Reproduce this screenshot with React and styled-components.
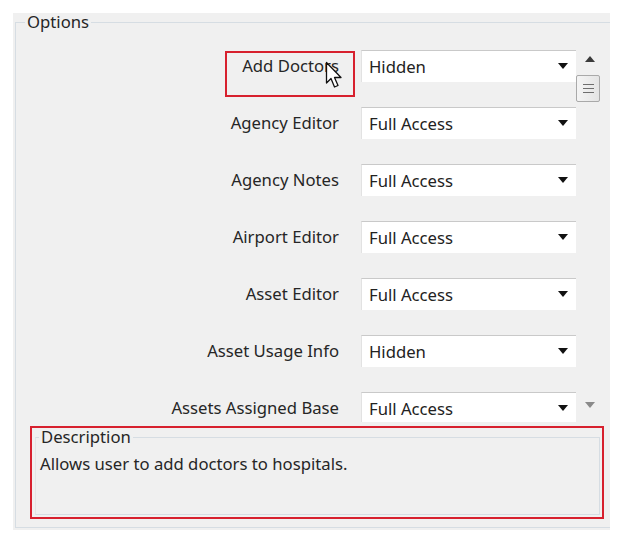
import React from "react";
import styled, { createGlobalStyle } from "styled-components";

const Global = createGlobalStyle`
  html, body {
    margin: 0;
    padding: 0;
    background: #fff;
  }
  body {
    font-family: "Noto Sans", "DejaVu Sans", sans-serif;
    font-size: 16.7px;
    color: #262626;
  }
`;

const Panel = styled.div`
  margin: 13px 0 0 13px;
  width: 597px;
  height: 517px;
  background: #f0f0f0;
  box-sizing: border-box;
  padding-left: 2px;
`;

const Group = styled.fieldset`
  margin: 0;
  padding: 6px 0 0 0;
  width: 595px;
  height: 515px;
  box-sizing: border-box;
  border: 1px solid #d6dde3;
  border-right: none;
  display: flex;
  flex-direction: column;
`;

const Legend = styled.legend`
  margin-left: 9px;
  padding: 0 2px;
  line-height: 18px;
  font-size: 16.7px;
`;

const ScrollArea = styled.div`
  display: flex;
  height: 385px;
  width: 586px;
`;

const Viewport = styled.div`
  flex: 1;
  overflow: hidden;
`;

const Row = styled.div`
  position: relative;
  height: 57px;
  display: grid;
  grid-template-columns: 1fr 215px;
  column-gap: 22px;
  align-items: center;
`;

const Label = styled.div`
  text-align: right;
  white-space: nowrap;
`;

const Highlight = styled.div`
  position: absolute;
  left: 209px;
  top: 14px;
  width: 126px;
  height: 42px;
  border: 2px solid #d7202e;
  pointer-events: none;
`;

const Cursor = styled.svg`
  position: absolute;
  left: 309px;
  top: 24px;
`;

const Select = styled.div`
  height: 32px;
  box-sizing: border-box;
  background: #fff;
  border-top: 1px solid #c9c9c9;
  border-left: 1px solid #e2e2e2;
  display: flex;
  align-items: center;
  justify-content: space-between;
  padding: 0 8px 0 7px;
  color: #222;
`;

const Caret = styled.span`
  width: 0;
  height: 0;
  border-left: 5px solid transparent;
  border-right: 5px solid transparent;
  border-top: 6px solid #111;
`;

const Scrollbar = styled.div`
  width: 25px;
  margin-left: 1px;
  display: flex;
  flex-direction: column;
  align-items: center;
  padding-top: 19px;
  box-sizing: border-box;
`;

const Arrow = styled.span`
  width: 0;
  height: 0;
  border-left: 5px solid transparent;
  border-right: 5px solid transparent;
  ${(p) =>
    p.$up
      ? `border-bottom: 6px solid ${p.$color};`
      : `border-top: 6px solid ${p.$color};`}
`;

const Thumb = styled.div`
  margin-top: 13px;
  margin-left: -3px;
  width: 24px;
  height: 27px;
  box-sizing: border-box;
  border: 1px solid #a9a9a9;
  border-radius: 2px;
  background: linear-gradient(to right, #f4f4f4, #e4e4e4);
  display: flex;
  flex-direction: column;
  justify-content: center;
  align-items: center;
  gap: 3px;
`;

const Grip = styled.span`
  width: 11px;
  height: 1px;
  background: #6e6e6e;
`;

const Spacer = styled.div`
  flex: 1;
`;

const BottomGap = styled.div`
  height: 14px;
`;

const DescBox = styled.div`
  margin: 4px 0 0 14px;
  width: 574px;
  height: 93px;
  box-sizing: border-box;
  border: 2px solid #d7202e;
  padding: 0 2px 4px 3px;
`;

const DescGroup = styled.fieldset`
  margin: 0;
  padding: 8px 0 0 4px;
  height: 87px;
  box-sizing: border-box;
  border: 1px solid #d6dde3;
  border-left-color: #e4e4e4;
`;

const DescLegend = styled.legend`
  margin-left: -1px;
  padding: 0 2px;
  line-height: 18px;
  font-size: 16.7px;
`;

const DescText = styled.div`
  line-height: 20px;
`;

const rows = [
  ["Add Doctors", "Hidden"],
  ["Agency Editor", "Full Access"],
  ["Agency Notes", "Full Access"],
  ["Airport Editor", "Full Access"],
  ["Asset Editor", "Full Access"],
  ["Asset Usage Info", "Hidden"],
  ["Assets Assigned Base", "Full Access"],
];

export default function App() {
  return (
    <>
      <Global />
      <Panel>
        <Group>
          <Legend>Options</Legend>
          <ScrollArea>
            <Viewport>
              {rows.map(([label, value], i) => (
                <Row key={label}>
                  <Label>{label}</Label>
                  <Select>
                    <span>{value}</span>
                    <Caret />
                  </Select>
                  {i === 0 && (
                    <>
                      <Highlight />
                      <Cursor width="20" height="30" viewBox="0 0 20 30">
                        <path
                          d="M1.5 1.5 L1.5 22 L6 17.5 L9.5 26 L13 24.5 L9.5 16.5 L16 16.5 Z"
                          fill="#fff"
                          stroke="#111"
                          strokeWidth="1.3"
                          strokeLinejoin="round"
                        />
                      </Cursor>
                    </>
                  )}
                </Row>
              ))}
            </Viewport>
            <Scrollbar>
              <Arrow $up $color="#3a3a3a" />
              <Thumb>
                <Grip />
                <Grip />
                <Grip />
              </Thumb>
              <Spacer />
              <Arrow $color="#8a8a8a" />
              <BottomGap />
            </Scrollbar>
          </ScrollArea>
          <DescBox>
            <DescGroup>
              <DescLegend>Description</DescLegend>
              <DescText>Allows user to add doctors to hospitals.</DescText>
            </DescGroup>
          </DescBox>
        </Group>
      </Panel>
    </>
  );
}
